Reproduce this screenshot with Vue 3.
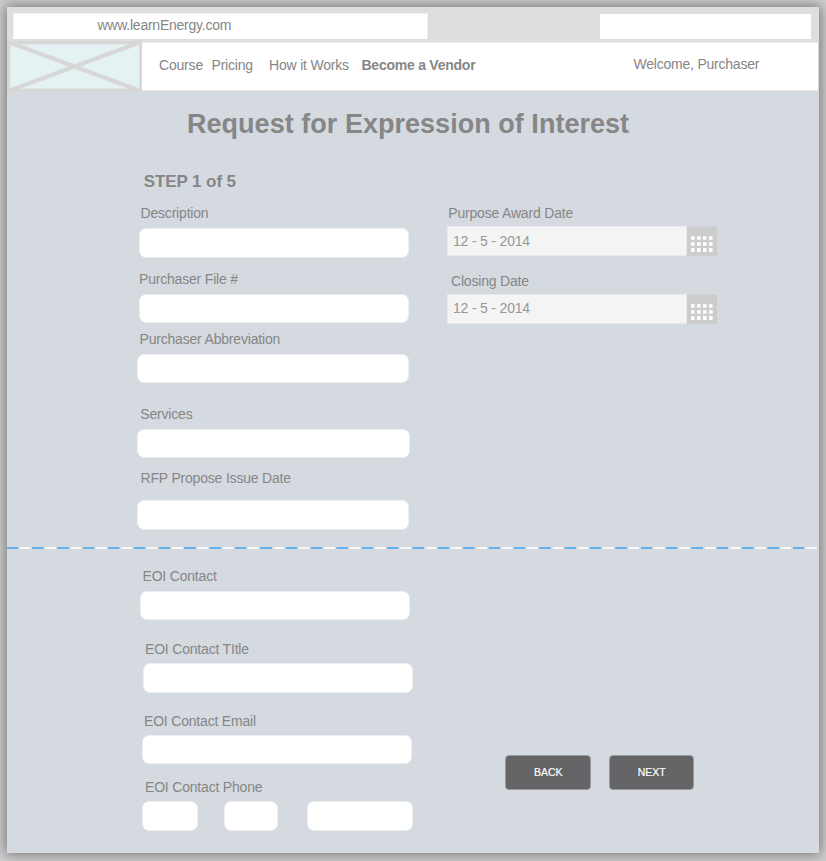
<script setup>
const fields = [
  { id: 'description', label: 'Description' },
  { id: 'file', label: 'Purchaser File #' },
  { id: 'abbreviation', label: 'Purchaser Abbreviation' },
  { id: 'services', label: 'Services' },
  { id: 'issue', label: 'RFP Propose Issue Date' },
]
const contacts = [
  { id: 'contact', label: 'EOI Contact' },
  { id: 'title', label: 'EOI Contact TItle' },
  { id: 'email', label: 'EOI Contact Email' },
]
const dates = [
  { id: 'award', label: 'Purpose Award Date' },
  { id: 'closing', label: 'Closing Date' },
]
const dots = [0, 1, 2, 3]
</script>

<template>
  <div class="stage">
    <div class="window">
      <header class="browser">
        <div class="address"><span>www.learnEnergy.com</span></div>
        <div class="search"></div>
      </header>
      <nav class="nav">
        <svg class="logo" width="135" height="51" viewBox="0 0 135 51">
          <rect width="135" height="51" fill="#d7d7d7" />
          <rect x="3.3" y="3.3" width="129" height="44.4" fill="#e5f2f4" />
          <path d="M4 2L131 49M131 2L4 49" stroke="#d7d7d7" stroke-width="4.2" />
        </svg>
        <div class="links">
          <a class="course">Course</a>
          <a class="pricing">Pricing</a>
          <a class="how">How it Works</a>
          <a class="vendor">Become a Vendor</a>
          <span class="welcome">Welcome, Purchaser</span>
        </div>
      </nav>

      <h1>Request for Expression of Interest</h1>

      <main>
        <section class="upper">
          <div class="left">
            <h2>STEP 1 of 5</h2>
            <div v-for="f in fields" :key="f.id" class="field" :class="f.id">
              <label>{{ f.label }}</label>
              <div class="input"></div>
            </div>
          </div>
          <div class="right">
            <div v-for="d in dates" :key="d.id" class="date" :class="d.id">
              <label>{{ d.label }}</label>
              <div class="picker">
                <div class="value"><span>12 - 5 - 2014</span></div>
                <svg class="calendar" width="30" height="30" viewBox="0 0 30 30">
                  <rect y="0.5" width="30" height="29.2" fill="#cccccc" />
                  <g v-for="x in dots" :key="x" fill="#fff">
                    <rect :x="4 + x * 6" y="10.2" width="3.6" height="3.5" />
                    <rect :x="4 + x * 6" y="16.2" width="3.6" height="3.5" />
                    <rect :x="4 + x * 6" y="22" width="3.6" height="4" />
                  </g>
                </svg>
              </div>
            </div>
          </div>
        </section>

        <div class="divider"></div>

        <section class="lower">
          <div class="left">
            <div v-for="f in contacts" :key="f.id" class="field" :class="f.id">
              <label>{{ f.label }}</label>
              <div class="input"></div>
            </div>
            <div class="field phone">
              <label>EOI Contact Phone</label>
              <div class="numbers">
                <div class="input area"></div>
                <div class="input prefix"></div>
                <div class="input line"></div>
              </div>
            </div>
          </div>
          <div class="actions">
            <button>BACK</button>
            <button>NEXT</button>
          </div>
        </section>
      </main>
    </div>
  </div>
</template>

<style>
body {
  background: #cdcdcd;
}
</style>

<style scoped>
* {
  box-sizing: border-box;
}
.stage {
  height: 861px;
  padding: 7px;
  overflow: hidden;
  font: 14px/16px "Liberation Sans", Arial, sans-serif;
  letter-spacing: -0.19px;
  color: #868686;
}
.window {
  width: 812px;
  height: 846px;
  background: #d5dae1;
  box-shadow: 0 0 12px 1px rgba(0, 0, 0, 0.45);
}
.browser {
  display: flex;
  justify-content: space-between;
  height: 35px;
  padding: 6px 8px 3px 6px;
  background: #dedede;
}
.address {
  width: 415px;
  height: 26px;
  padding: 3px 0 0 83.5px;
  background: #fff;
  border: 1px solid #f0f0f0;
  border-bottom: 0;
  letter-spacing: -0.24px;
}
.search {
  width: 211px;
  height: 25px;
  margin-top: 1px;
  background: #fff;
}
.nav {
  display: flex;
  height: 49px;
}
.logo {
  flex: none;
  display: block;
  height: 51px;
  margin-top: -1px;
}
.links {
  display: flex;
  flex: none;
  width: 676px;
  height: 49px;
  padding: 14px 0 0 17px;
  background: #fff;
  border-top: 1px solid #ececec;
  border-bottom: 1px solid #e4e4e4;
  white-space: nowrap;
}
.course { width: 52.5px; }
.pricing { width: 57.5px; }
.how { width: 92.5px; }
.vendor { width: 272px; font-weight: 700; letter-spacing: -0.24px; }
.welcome { margin-top: -1px; letter-spacing: -0.22px; }
h1 {
  height: 34px;
  margin: 16px 0 0 180px;
  font-size: 27px;
  line-height: 34px;
  font-weight: 700;
  letter-spacing: 0.03px;
  white-space: nowrap;
}
.upper {
  display: flex;
  height: 406px;
}
.left {
  width: 440px;
  flex: none;
}
h2 {
  height: 20px;
  margin: 31px 0 0 136.8px;
  font-size: 17px;
  line-height: 20px;
  letter-spacing: -0.1px;
}
label {
  display: block;
  height: 16px;
  white-space: nowrap;
}
.input {
  height: 29px;
  background: #fff;
  border: 1px solid #eceef1;
  border-radius: 7px;
}
.field .input {
  width: 270px;
}
.description { margin: 13px 0 0 132px; }
.description label { margin: 0 0 7px 1.5px; }
.description .input { height: 30px; }
.file { margin: 13px 0 0 132px; }
.file label { margin-bottom: 7px; }
.abbreviation { margin: 8px 0 0 130px; }
.abbreviation label { margin: 0 0 7px 2.5px; }
.field.abbreviation .input, .field.issue .input { width: 272px; }
.services { margin: 23px 0 0 130px; }
.services label { margin: 0 0 7px 3.3px; }
.field.services .input { width: 273px; }
.issue { margin: 12px 0 0 130px; }
.issue label { margin: 0 0 14px 3.5px; }
.issue .input { height: 30px; }
.right {
  padding-top: 64px;
}
.date label { margin: 0 0 5px 1.3px; }
.closing { margin-top: 17px; }
.closing label { margin: 0 0 5px 4px; }
.picker {
  display: flex;
}
.value {
  width: 240px;
  height: 30px;
  padding: 6px 0 0 5px;
  background: #f4f4f4;
  border: 1px solid #e8e9ec;
  color: #979797;
}
.closing .value {
  padding-top: 5px;
}
.calendar {
  display: block;
}
.divider {
  width: 811px;
  height: 2px;
  background: repeating-linear-gradient(90deg, #64b1ec 0 10.8px, #d5dae1 11.3px 12.8px, #f7f8f9 13.2px 23.2px, #d5dae1 23.7px 24.8px, #64b1ec 25.36px);
}
.lower {
  display: flex;
  padding-top: 19px;
}
.contact { margin-left: 133px; }
.contact label { margin: 0 0 7px 2.5px; }
.title { margin: 21px 0 0 136px; }
.title label { margin: 0 0 6px 2px; }
.title .input { height: 30px; }
.email { margin: 20px 0 0 135px; }
.email label { margin: 0 0 6px 2px; }
.phone { margin: 15px 0 0 135px; }
.phone label { margin: 0 0 6px 3px; }
.numbers {
  display: flex;
}
.field .area { width: 56px; margin-right: 26px; }
.field .prefix { width: 54px; margin-right: 29px; }
.field .line { width: 106px; }
.numbers .input { height: 30px; }
.actions {
  display: flex;
  gap: 18px;
  padding: 187px 0 0 58px;
}
button {
  width: 85.5px;
  height: 35px;
  padding: 0 0 1px 1px;
  background: #646466;
  border: 1px solid #97999d;
  border-radius: 4px;
  color: #fff;
  font: 10.5px/12px "Liberation Sans", Arial, sans-serif;
  -webkit-text-stroke: 0.2px #fff;
}
</style>
